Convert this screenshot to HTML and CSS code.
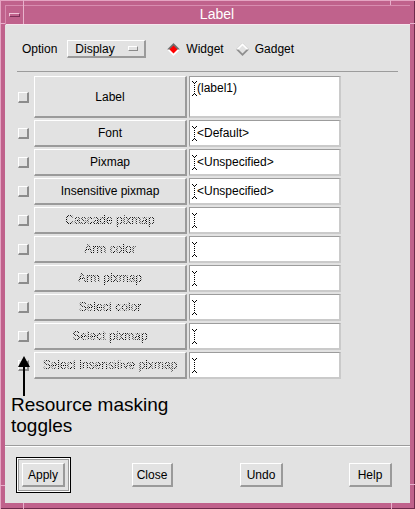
FILE: index.html
```html
<!DOCTYPE html>
<html>
<head>
<meta charset="utf-8">
<link rel="stylesheet" href="styles.css">
</head>
<body>
<div class="window">
  <span class="notch nv n-tl"></span>
  <span class="notch nv n-tr"></span>
  <span class="notch nv n-bl"></span>
  <span class="notch nv n-br"></span>
  <span class="notch nh n-lt"></span>
  <span class="notch nh n-rt"></span>
  <span class="notch nh n-lb"></span>
  <span class="notch nh n-rb"></span>
  <div class="titlebar">
    <div class="menubtn"><span class="menubar"></span></div>
    <div class="title">Label</div>
  </div>
  <div class="panel">
    <div class="optrow">
      <span class="optlabel">Option</span>
      <div class="optmenu">Display<span class="optind"></span></div>
      <div class="radio first">
        <svg class="diamond" width="13" height="13" viewBox="0 0 13 13"><polygon points="6.5,0 13,6.5 6.5,13 0,6.5" fill="#ffffff"/><polygon points="0,6.5 6.5,0 13,6.5" fill="#6e6e6e"/><polygon points="6.5,2.5 10.5,6.5 6.5,10.5 2.5,6.5" fill="#ff0000"/></svg>
        <span>Widget</span>
      </div>
      <div class="radio second">
        <svg class="diamond" width="13" height="13" viewBox="0 0 13 13"><polygon points="6.5,0 13,6.5 6.5,13 0,6.5" fill="#8e8e8e"/><polygon points="0,6.5 6.5,0 13,6.5" fill="#ffffff"/><polygon points="6.5,2.5 10.5,6.5 6.5,10.5 2.5,6.5" fill="#e2e2e2"/></svg>
        <span>Gadget</span>
      </div>
    </div>
    <div class="sep"></div>
    <div class="rows">
      <div class="row tall">
        <span class="toggle"></span>
        <div class="rbtn">Label</div>
        <div class="field"><svg class="cur" width="5" height="15" viewBox="0 0 5 15"><path d="M0 0h1v1H0zM4 0h1v1H4zM1 1h1v1H1zM3 1h1v1H3zM2 2h1v1H2zM2 4h1v1H2zM2 6h1v1H2zM2 8h1v1H2zM2 10h1v1H2zM2 12h1v1H2zM1 13h1v1H1zM3 13h1v1H3zM0 14h1v1H0zM4 14h1v1H4z" fill="#000"/></svg><span class="ftext">(label1)</span></div>
      </div>
      <div class="row">
        <span class="toggle"></span>
        <div class="rbtn">Font</div>
        <div class="field"><svg class="cur" width="5" height="15" viewBox="0 0 5 15"><path d="M0 0h1v1H0zM4 0h1v1H4zM1 1h1v1H1zM3 1h1v1H3zM2 2h1v1H2zM2 4h1v1H2zM2 6h1v1H2zM2 8h1v1H2zM2 10h1v1H2zM2 12h1v1H2zM1 13h1v1H1zM3 13h1v1H3zM0 14h1v1H0zM4 14h1v1H4z" fill="#000"/></svg><span class="ftext">&lt;Default&gt;</span></div>
      </div>
      <div class="row">
        <span class="toggle"></span>
        <div class="rbtn">Pixmap</div>
        <div class="field"><svg class="cur" width="5" height="15" viewBox="0 0 5 15"><path d="M0 0h1v1H0zM4 0h1v1H4zM1 1h1v1H1zM3 1h1v1H3zM2 2h1v1H2zM2 4h1v1H2zM2 6h1v1H2zM2 8h1v1H2zM2 10h1v1H2zM2 12h1v1H2zM1 13h1v1H1zM3 13h1v1H3zM0 14h1v1H0zM4 14h1v1H4z" fill="#000"/></svg><span class="ftext">&lt;Unspecified&gt;</span></div>
      </div>
      <div class="row">
        <span class="toggle"></span>
        <div class="rbtn">Insensitive pixmap</div>
        <div class="field"><svg class="cur" width="5" height="15" viewBox="0 0 5 15"><path d="M0 0h1v1H0zM4 0h1v1H4zM1 1h1v1H1zM3 1h1v1H3zM2 2h1v1H2zM2 4h1v1H2zM2 6h1v1H2zM2 8h1v1H2zM2 10h1v1H2zM2 12h1v1H2zM1 13h1v1H1zM3 13h1v1H3zM0 14h1v1H0zM4 14h1v1H4z" fill="#000"/></svg><span class="ftext">&lt;Unspecified&gt;</span></div>
      </div>
      <div class="row">
        <span class="toggle"></span>
        <div class="rbtn"><span class="dis">Cascade pixmap</span></div>
        <div class="field"><svg class="cur" width="5" height="15" viewBox="0 0 5 15"><path d="M0 0h1v1H0zM4 0h1v1H4zM1 1h1v1H1zM3 1h1v1H3zM2 2h1v1H2zM2 4h1v1H2zM2 6h1v1H2zM2 8h1v1H2zM2 10h1v1H2zM2 12h1v1H2zM1 13h1v1H1zM3 13h1v1H3zM0 14h1v1H0zM4 14h1v1H4z" fill="#000"/></svg></div>
      </div>
      <div class="row">
        <span class="toggle"></span>
        <div class="rbtn"><span class="dis">Arm color</span></div>
        <div class="field"><svg class="cur" width="5" height="15" viewBox="0 0 5 15"><path d="M0 0h1v1H0zM4 0h1v1H4zM1 1h1v1H1zM3 1h1v1H3zM2 2h1v1H2zM2 4h1v1H2zM2 6h1v1H2zM2 8h1v1H2zM2 10h1v1H2zM2 12h1v1H2zM1 13h1v1H1zM3 13h1v1H3zM0 14h1v1H0zM4 14h1v1H4z" fill="#000"/></svg></div>
      </div>
      <div class="row">
        <span class="toggle"></span>
        <div class="rbtn"><span class="dis">Arm pixmap</span></div>
        <div class="field"><svg class="cur" width="5" height="15" viewBox="0 0 5 15"><path d="M0 0h1v1H0zM4 0h1v1H4zM1 1h1v1H1zM3 1h1v1H3zM2 2h1v1H2zM2 4h1v1H2zM2 6h1v1H2zM2 8h1v1H2zM2 10h1v1H2zM2 12h1v1H2zM1 13h1v1H1zM3 13h1v1H3zM0 14h1v1H0zM4 14h1v1H4z" fill="#000"/></svg></div>
      </div>
      <div class="row">
        <span class="toggle"></span>
        <div class="rbtn"><span class="dis">Select color</span></div>
        <div class="field"><svg class="cur" width="5" height="15" viewBox="0 0 5 15"><path d="M0 0h1v1H0zM4 0h1v1H4zM1 1h1v1H1zM3 1h1v1H3zM2 2h1v1H2zM2 4h1v1H2zM2 6h1v1H2zM2 8h1v1H2zM2 10h1v1H2zM2 12h1v1H2zM1 13h1v1H1zM3 13h1v1H3zM0 14h1v1H0zM4 14h1v1H4z" fill="#000"/></svg></div>
      </div>
      <div class="row">
        <span class="toggle"></span>
        <div class="rbtn"><span class="dis">Select pixmap</span></div>
        <div class="field"><svg class="cur" width="5" height="15" viewBox="0 0 5 15"><path d="M0 0h1v1H0zM4 0h1v1H4zM1 1h1v1H1zM3 1h1v1H3zM2 2h1v1H2zM2 4h1v1H2zM2 6h1v1H2zM2 8h1v1H2zM2 10h1v1H2zM2 12h1v1H2zM1 13h1v1H1zM3 13h1v1H3zM0 14h1v1H0zM4 14h1v1H4z" fill="#000"/></svg></div>
      </div>
      <div class="row">
        <span class="toggle"></span>
        <div class="rbtn"><span class="dis">Select insensitive pixmap</span></div>
        <div class="field"><svg class="cur" width="5" height="15" viewBox="0 0 5 15"><path d="M0 0h1v1H0zM4 0h1v1H4zM1 1h1v1H1zM3 1h1v1H3zM2 2h1v1H2zM2 4h1v1H2zM2 6h1v1H2zM2 8h1v1H2zM2 10h1v1H2zM2 12h1v1H2zM1 13h1v1H1zM3 13h1v1H3zM0 14h1v1H0zM4 14h1v1H4z" fill="#000"/></svg></div>
      </div>
    </div>
    <div class="annot">
      <svg class="arrow" width="14" height="40" viewBox="0 0 14 40"><polygon points="7,0 13,11 1,11" fill="#000"/><rect x="6" y="10" width="2" height="30" fill="#000"/></svg>
      Resource masking<br>toggles
    </div>
    <div class="bottom">
      <div class="bsep"></div>
      <div class="btnrow">
        <div class="slot def"><div class="pbtn">Apply</div></div>
        <div class="slot"><div class="pbtn narrow">Close</div></div>
        <div class="slot"><div class="pbtn">Undo</div></div>
        <div class="slot"><div class="pbtn">Help</div></div>
      </div>
    </div>
  </div>
</div>
</body>
</html>
```

FILE: styles.css
```css
* { box-sizing: border-box; margin: 0; padding: 0; }
html, body { width: 415px; height: 509px; overflow: hidden; background: #c0628c; }
body { font-family: "Liberation Sans", Arial, sans-serif; font-size: 12px; color: #000; }

.window {
  position: relative;
  width: 415px; height: 509px;
  background: #c0628c;
  padding: 5px 5px 6px 5px;
  display: flex; flex-direction: column;
  box-shadow: inset 1px 1px 0 #e4a4c2, inset -1px -1px 0 #6e2a4c;
}
.notch { position: absolute; background: #e8b0cc; }
.nv { width: 1px; height: 5px; }
.nh { width: 5px; height: 1px; }
.n-tl { left: 23px; top: 0; }
.n-tr { left: 390px; top: 0; }
.n-bl { left: 23px; bottom: 0; height: 6px; }
.n-br { left: 391px; bottom: 0; height: 6px; }
.n-lt { left: 0; top: 23px; }
.n-rt { right: 0; top: 23px; }
.n-lb { left: 0; top: 485px; }
.n-rb { right: 0; top: 484px; }

.titlebar {
  height: 20px;
  display: flex;
  box-shadow: inset 1px 1px 0 #d88cb0, inset 0 -1px 0 #f6e6ee;
}
.menubtn {
  width: 19px; height: 19px;
  border-right: 1px solid #e8b4cc;
  display: flex; align-items: center; justify-content: center;
}
.menubar {
  width: 11px; height: 4px;
  border: 1px solid; border-color: #f2c6da #7c3058 #7c3058 #f2c6da;
  background: #c0628c;
}
.title {
  flex: 1; text-align: center; color: #fff;
  font-size: 14px; line-height: 19px;
}

.panel {
  flex: 1;
  background: #e2e2e2;
  display: flex; flex-direction: column;
}

.optrow {
  display: flex; align-items: center;
  height: 18px; margin-top: 15px; padding-left: 17px;
}
.optmenu {
  margin-left: 10px;
  width: 79px; height: 18px;
  border-style: solid; border-width: 1px 2px 2px 1px;
  border-color: #fff #9a9a9a #9a9a9a #fff;
  display: flex; align-items: center; padding-left: 7px;
}
.optind {
  width: 10px; height: 5px;
  margin-left: auto; margin-right: 6px;
  border: 1px solid; border-color: #fff #8a8a8a #8a8a8a #fff;
}
.radio { display: flex; align-items: center; }
.radio.first { margin-left: 21px; }
.radio.second { margin-left: 12px; }
.diamond { display: block; margin-right: 6px; }

.sep { height: 1px; background: #9c9c9c; margin: 13px 12px 0 12px; }

.rows {
  margin-top: 4px; padding-left: 13px;
  display: flex; flex-direction: column; gap: 2px;
}
.row { display: flex; align-items: center; height: 27px; }
.row.tall { height: 42px; }
.toggle {
  width: 11px; height: 11px; margin-right: 5px;
  border-style: solid; border-width: 1px 2px 2px 1px;
  border-color: #fff #8c8c8c #8c8c8c #fff;
}
.rbtn {
  width: 153px; height: 100%;
  border-style: solid; border-width: 1px 2px 2px 1px;
  border-color: #fff #9a9a9a #9a9a9a #fff;
  display: flex; align-items: center; justify-content: center;
}
.dis {
  color: transparent;
  background: repeating-conic-gradient(#000 0 25%, transparent 0 50%) 0 0 / 2px 2px;
  -webkit-background-clip: text; background-clip: text;
}
.field {
  width: 152px; height: 100%; margin-left: 2px;
  background: #fff;
  border-style: solid; border-width: 1px 2px 2px 1px;
  border-color: #9c9c9c #cacaca #cacaca #9c9c9c;
  display: flex; align-items: center; padding-left: 2px;
}
.row.tall .field { align-items: flex-start; padding-top: 4px; }
.cur { display: block; flex: none; }
.ftext { line-height: 15px; }

.annot {
  position: relative;
  margin-top: 15px; padding-left: 6px;
  font-size: 19px; line-height: 21px;
}
.arrow { position: absolute; left: 12px; top: -38px; display: block; }

.bottom { margin-top: auto; }
.bsep { height: 2px; border-top: 1px solid #9c9c9c; border-bottom: 1px solid #fff; }
.btnrow { display: flex; gap: 54px; padding: 10px 0 10px 11px; }
.slot {
  width: 55px; height: 36px;
  display: flex; align-items: center; justify-content: center;
}
.slot.def {
  border: 1px solid #000;
  box-shadow: inset 1px 1px 0 #fff, inset -1px -1px 0 #fff, inset 2px 2px 0 #9a9a9a, inset -2px -2px 0 #9a9a9a;
}
.pbtn {
  width: 43px; height: 24px;
  border-style: solid; border-width: 1px 2px 2px 1px;
  border-color: #fff #9a9a9a #9a9a9a #fff;
  display: flex; align-items: center; justify-content: center;
}
.pbtn.narrow { width: 41px; }
```
